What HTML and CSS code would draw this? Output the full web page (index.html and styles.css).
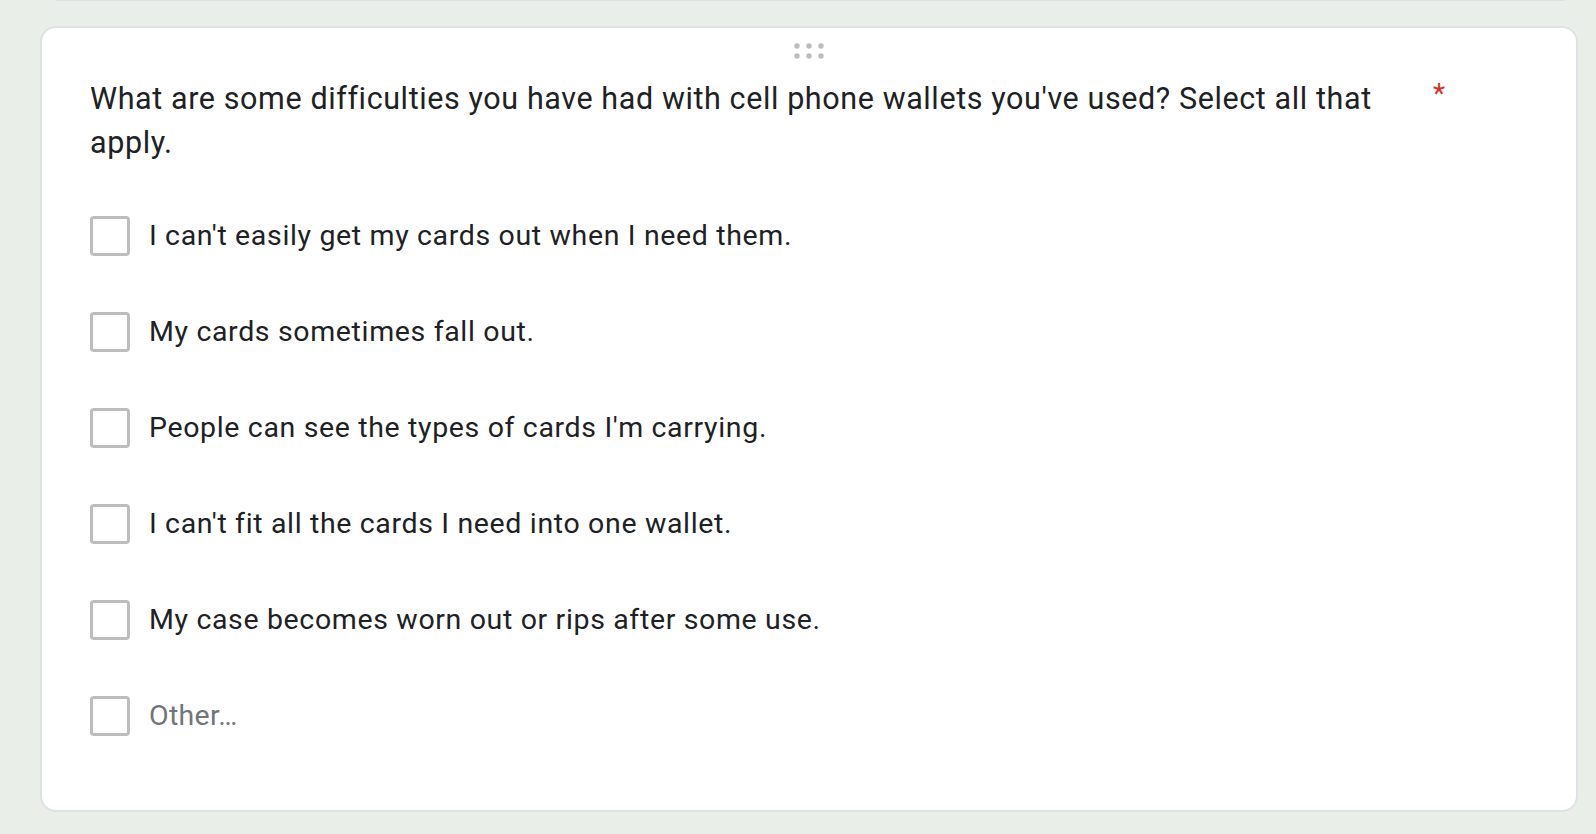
FILE: index.html
```html
<!DOCTYPE html>
<html lang="en">
<head>
    <meta charset="UTF-8">
    <meta name="viewport" content="width=device-width, initial-scale=1.0">
    <title>Cell Phone Wallet Survey</title>
    <link rel="stylesheet" href="styles.css">
</head>
<body>
    <div class="prev-card"></div>
    <div class="card">
        <div class="drag-handle">
            <svg width="30" height="16" viewBox="0 0 30 16">
                <circle cx="3" cy="3" r="2.7" fill="#bdbdbd"/>
                <circle cx="15" cy="3" r="2.7" fill="#bdbdbd"/>
                <circle cx="27" cy="3" r="2.7" fill="#bdbdbd"/>
                <circle cx="3" cy="13" r="2.7" fill="#bdbdbd"/>
                <circle cx="15" cy="13" r="2.7" fill="#bdbdbd"/>
                <circle cx="27" cy="13" r="2.7" fill="#bdbdbd"/>
            </svg>
        </div>
        <div class="question">
            <div class="question-title">What are some difficulties you have had with cell phone wallets you've used? Select all that apply.</div>
            <span class="required">*</span>
        </div>
        <div class="options">
            <label class="option">
                <span class="checkbox"></span>
                <span class="option-text">I can't easily get my cards out when I need them.</span>
            </label>
            <label class="option">
                <span class="checkbox"></span>
                <span class="option-text">My cards sometimes fall out.</span>
            </label>
            <label class="option">
                <span class="checkbox"></span>
                <span class="option-text">People can see the types of cards I'm carrying.</span>
            </label>
            <label class="option">
                <span class="checkbox"></span>
                <span class="option-text">I can't fit all the cards I need into one wallet.</span>
            </label>
            <label class="option">
                <span class="checkbox"></span>
                <span class="option-text">My case becomes worn out or rips after some use.</span>
            </label>
            <label class="option">
                <span class="checkbox"></span>
                <span class="option-text other">Other…</span>
            </label>
        </div>
    </div>
</body>
</html>
```

FILE: styles.css
```css
body {
    font-family: Roboto, "Noto Sans", Arial, sans-serif;
    background-color: #e9eee8;
    color: #202124;
    margin: 0;
    overflow: hidden;
}
.prev-card {
    box-sizing: border-box;
    height: 20px;
    margin: -19px 26px 0 50px;
    background: #ffffff;
    border: 2px solid #e0e1e4;
    border-top: none;
    border-radius: 0 0 8px 8px;
}
.card {
    box-sizing: border-box;
    width: 1538px;
    height: 786px;
    margin: 25px 0 0 40px;
    background: #ffffff;
    border: 2px solid #e0e1e4;
    border-radius: 16px;
    padding: 0 48px;
}
.drag-handle {
    display: flex;
    justify-content: center;
    height: 49px;
    padding-top: 15px;
    box-sizing: border-box;
}
.question {
    display: flex;
    align-items: flex-start;
}
.question-title {
    width: 1310px;
    font-size: 30.5px;
    letter-spacing: 0.6px;
    line-height: 44px;
}
.required {
    color: #d93025;
    font-size: 28px;
    line-height: 34px;
    margin-left: 33px;
}
.options {
    display: flex;
    flex-direction: column;
    gap: 56px;
    margin-top: 51px;
}
.option {
    display: flex;
    align-items: center;
    gap: 19px;
    height: 40px;
}
.checkbox {
    box-sizing: border-box;
    width: 40px;
    height: 40px;
    border: 3px solid #bdbdbd;
    border-radius: 4px;
    flex-shrink: 0;
}
.option-text {
    font-size: 28.5px;
    letter-spacing: 0.65px;
    line-height: 40px;
}
.option-text.other {
    color: #70757a;
    letter-spacing: 0.3px;
}
```
